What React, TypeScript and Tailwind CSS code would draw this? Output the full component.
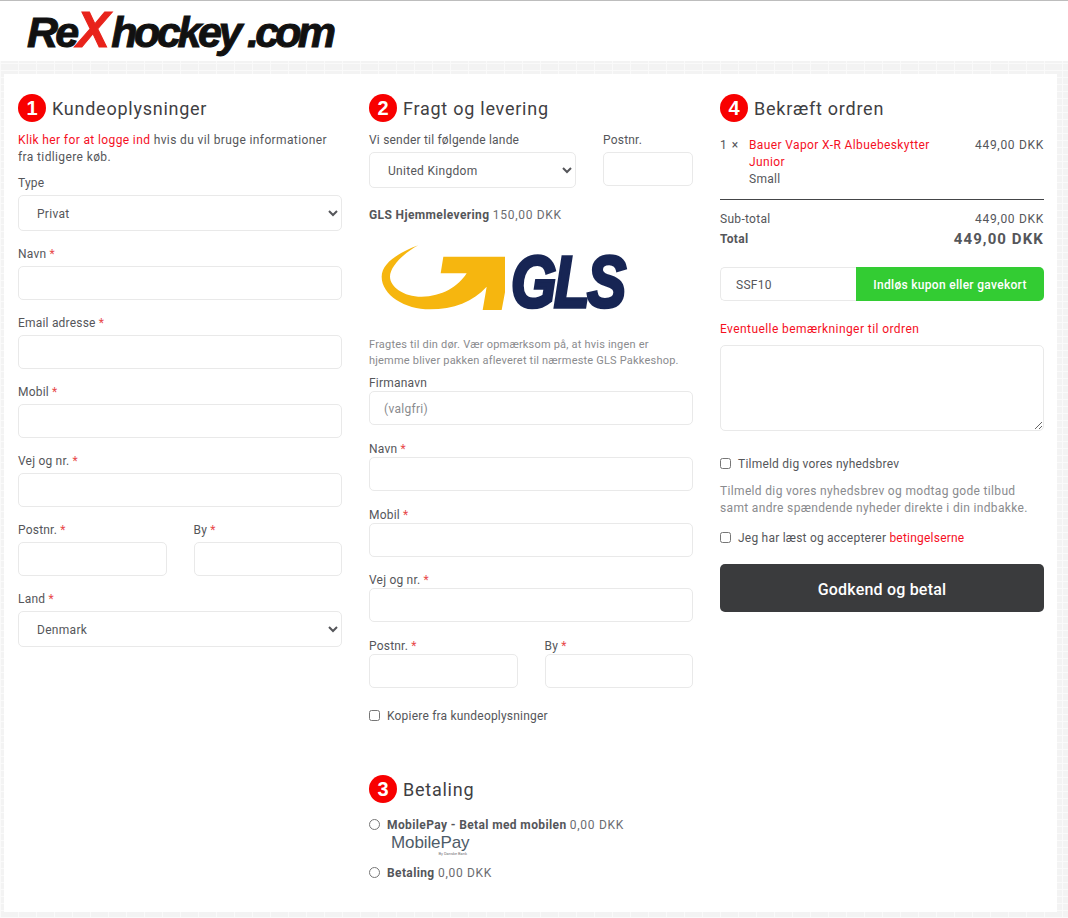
const font = "font-['Roboto',sans-serif]"
const red = "text-[#f5101f]"
const labelBase = "block h-[17px] leading-[17px] tracking-[0.2px] "

function Circle({ n }: { n: number }) {
  return (
    <span className="w-7 h-7 rounded-full bg-[#f80000] text-white font-['Liberation_Sans',sans-serif] font-bold text-[20px] tracking-normal flex items-center justify-center shrink-0">
      {n}
    </span>
  )
}

function Heading({ n, title }: { n: number; title: string }) {
  return (
    <div className="flex items-center gap-[6px] h-7">
      <Circle n={n} />
      <h2 className="text-[18px] font-normal tracking-[0.75px] text-[#3f4043]">{title}</h2>
    </div>
  )
}

function Field({ label, required, tight }: { label: string; required?: boolean; tight?: boolean }) {
  return (
    <div className={tight ? "mb-[14.5px]" : "mb-[15px]"}>
      <label className={tight ? "block h-[17px] leading-[19px] tracking-[0.2px]" : labelBase + "mb-[3px]"}>
        {label} {required && <span className="text-[#e8494a]">*</span>}
      </label>
      <input className="block w-full h-[34px] rounded-[5px] border border-[#e9e9e9] bg-white" />
    </div>
  )
}

function SelectBox({ value }: { value: string }) {
  return (
    <select defaultValue={value} className="block w-full h-9 rounded-[5px] border border-[#e9e9e9] bg-white pl-[14px] pt-[1px] text-[#55565a] outline-none">
      <option>{value}</option>
    </select>
  )
}

function GlsLogo() {
  return (
    <div className="relative h-[90px] w-[270px] overflow-hidden">
      <svg width="130" height="80" viewBox="0 0 390 240" className="absolute left-[6px] top-[5px] z-10">
        <path
          fill="#f6b60f"
          d="M130 16 C70 38 20 70 20 110 C20 165 90 208 165 208 C235 208 295 185 335 140 L323 210 L380 210 L410 50 L205 50 L197 100 L275 100 C250 140 200 170 140 170 C85 170 45 140 45 110 C45 80 85 40 130 16 Z"
        />
      </svg>
      <span className="absolute left-[142px] top-[4px] origin-left scale-x-[0.81] font-['Liberation_Sans',sans-serif] italic font-bold text-[72px] leading-[86px] tracking-[-3px] text-[#172554] [-webkit-text-stroke:3.5px_#172554]">
        GLS
      </span>
    </div>
  )
}

export default function App() {
  return (
    <div className={font + " h-[918px] overflow-hidden bg-[#f3f3f3] bg-[linear-gradient(#fafafa_1px,transparent_1px),linear-gradient(90deg,#fafafa_1px,transparent_1px)] bg-[size:18px_7px] text-[12px] tracking-[0.3px] text-[#55565a]"}>
      <header className="h-[61px] bg-white border-t border-[#bdbdbd] pl-[27px] flex items-center">
        <div className="font-['Liberation_Sans',sans-serif] italic font-bold text-[43px] leading-none tracking-[-2.7px] text-[#111] [-webkit-text-stroke:1px_#111] -mt-[3px]">
          Re<span className="text-[#e8231b] [-webkit-text-stroke:1px_#e8231b] text-[50px]">X</span>
          <span className="ml-[4px] tracking-[-3.4px]">hockey</span>
          <span className="ml-[8px] tracking-[-3.8px]">.com</span>
        </div>
      </header>

      <main className="mt-[13px] ml-1 w-[1053px] h-[838px] bg-white pl-[14px] pt-5 grid grid-cols-[324px_324px_324px] gap-x-[27px]">
        <section>
          <Heading n={1} title="Kundeoplysninger" />
          <p className="mt-[10px] leading-[17px] tracking-[0.38px]">
            <a className={red}>Klik her for at logge ind</a> <span>hvis du vil bruge informationer fra tidligere køb.</span>
          </p>
          <div className="mt-[9px]">
            <label className={labelBase + "mb-[3px]"}>Type</label>
            <SelectBox value="Privat" />
          </div>
          <div className="mt-[15px]">
            <Field label="Navn" required />
            <Field label="Email adresse" required />
            <Field label="Mobil" required />
            <Field label="Vej og nr." required />
            <div className="grid grid-cols-2 gap-x-[27px]">
              <Field label="Postnr." required />
              <Field label="By" required />
            </div>
            <label className={labelBase + "mb-[3px]"}>
              Land <span className="text-[#e8494a]">*</span>
            </label>
            <SelectBox value="Denmark" />
          </div>
        </section>

        <section>
          <Heading n={2} title="Fragt og levering" />
          <div className="mt-[10px] flex gap-x-[27px]">
            <div className="w-[207px]">
              <label className={labelBase + "mb-[3px]"}>Vi sender til følgende lande</label>
              <SelectBox value="United Kingdom" />
            </div>
            <div className="w-[90px]">
              <label className={labelBase + "mb-[3px]"}>Postnr.</label>
              <input className="block w-full h-[34px] rounded-[5px] border border-[#e9e9e9]" />
            </div>
          </div>
          <p className="mt-[19px] leading-[17px] tracking-[0.38px]">
            <b className="font-bold">GLS Hjemmelevering</b> <span className="text-[#6b6c70] tracking-[0.7px]">150,00 DKK</span>
          </p>
          <div className="mt-[11px]">
            <GlsLogo />
          </div>
          <p className="mt-[12px] pr-[14px] text-[11px] leading-4 tracking-[0.2px] text-[#8a8b8e]">
            Fragtes til din dør. Vær opmærksom på, at hvis ingen er hjemme bliver pakken afleveret til nærmeste GLS Pakkeshop.
          </p>
          <div className="mt-[4.5px]">
            <div className="mb-[15.5px]">
              <label className="block h-[17px] leading-[18px] tracking-[0.2px]">Firmanavn</label>
              <input placeholder="(valgfri)" className="block w-full h-[34px] rounded-[5px] border border-[#e9e9e9] pl-[14px] pt-[2px] placeholder:text-[#8a8b8e]" />
            </div>
            <Field label="Navn" required tight />
            <Field label="Mobil" required tight />
            <Field label="Vej og nr." required tight />
            <div className="grid grid-cols-2 gap-x-[27px]">
              <Field label="Postnr." required tight />
              <Field label="By" required tight />
            </div>
          </div>
          <label className="flex items-center gap-[7px] h-[17px] mt-[5px] tracking-[0.2px]">
            <input type="checkbox" className="w-[11px] h-[11px] appearance-auto" />
            Kopiere fra kundeoplysninger
          </label>

          <div className="mt-[51px]">
            <Heading n={3} title="Betaling" />
          </div>
          <label className="flex items-center gap-[7px] h-[17px] mt-[13px] tracking-[0.38px]">
            <input type="radio" className="w-[11px] h-[11px] appearance-auto" />
            <span>
              <b className="font-bold">MobilePay - Betal med mobilen</b> <span className="text-[#6b6c70] tracking-[0.7px]">0,00 DKK</span>
            </span>
          </label>
          <div className="ml-[22px] w-[82px]">
            <div className="font-['Liberation_Sans',sans-serif] text-[17px] leading-[19px] tracking-[-0.1px] text-[#4e5b68]">MobilePay</div>
            <div className="text-[4px] leading-[4px] tracking-normal text-right pr-[6px] text-[#777]">By Danske Bank</div>
          </div>
          <label className="flex items-center gap-[7px] h-[17px] mt-[8px] tracking-[0.38px]">
            <input type="radio" className="w-[11px] h-[11px] appearance-auto" />
            <span>
              <b className="font-bold">Betaling</b> <span className="text-[#6b6c70] tracking-[0.7px]">0,00 DKK</span>
            </span>
          </label>
        </section>

        <section>
          <Heading n={4} title="Bekræft ordren" />
          <div className="mt-[15px] flex">
            <span className="w-[29px] leading-[17px] tracking-[1px]">1 ×</span>
            <div className="w-[200px] leading-[17px]">
              <div className={red + " tracking-[0.38px]"}>Bauer Vapor X-R Albuebeskytter Junior</div>
              <div>Small</div>
            </div>
            <span className="ml-auto leading-[17px] tracking-[0.7px]">449,00 DKK</span>
          </div>
          <div className="mt-[11px] border-t border-[#444548]" />
          <div className="mt-[11px] flex justify-between leading-[17px]">
            <span>Sub-total</span>
            <span className="tracking-[0.7px]">449,00 DKK</span>
          </div>
          <div className="flex justify-between items-center h-[22px]">
            <b className="font-bold">Total</b>
            <b className="font-bold text-[15px] tracking-[1.1px]">449,00 DKK</b>
          </div>
          <div className="mt-[17px] flex h-[34px]">
            <input defaultValue="SSF10" className="w-[136px] rounded-l-[5px] border border-r-0 border-[#e9e9e9] pl-[15px] pt-[2px]" />
            <button className="flex-1 rounded-r-[5px] bg-[#33cc33] pt-[2px] text-white font-medium">Indløs kupon eller gavekort</button>
          </div>
          <label className={"block mt-[20px] h-[17px] leading-[17px] tracking-[0.42px] " + red}>Eventuelle bemærkninger til ordren</label>
          <textarea className="block mt-[7px] w-full h-[86px] rounded-[5px] border border-[#e9e9e9]" />
          <label className="flex items-center gap-[7px] h-[17px] mt-[24px] tracking-[0.22px]">
            <input type="checkbox" className="w-[11px] h-[11px] appearance-auto" />
            Tilmeld dig vores nyhedsbrev
          </label>
          <p className="mt-[11px] leading-[17px] tracking-[0.34px] text-[#8a8b8e]">
            Tilmeld dig vores nyhedsbrev og modtag gode tilbud samt andre spændende nyheder direkte i din indbakke.
          </p>
          <label className="flex items-center gap-[7px] h-[17px] mt-[12px] tracking-[0.22px]">
            <input type="checkbox" className="w-[11px] h-[11px] appearance-auto" />
            <span>
              Jeg har læst og accepterer <span className={red}>betingelserne</span>
            </span>
          </label>
          <button className="mt-[18px] w-full h-12 rounded-[5px] bg-[#3a3b3d] pt-[3px] text-white text-[16px] font-medium tracking-[0.2px]">Godkend og betal</button>
        </section>
      </main>
    </div>
  )
}
